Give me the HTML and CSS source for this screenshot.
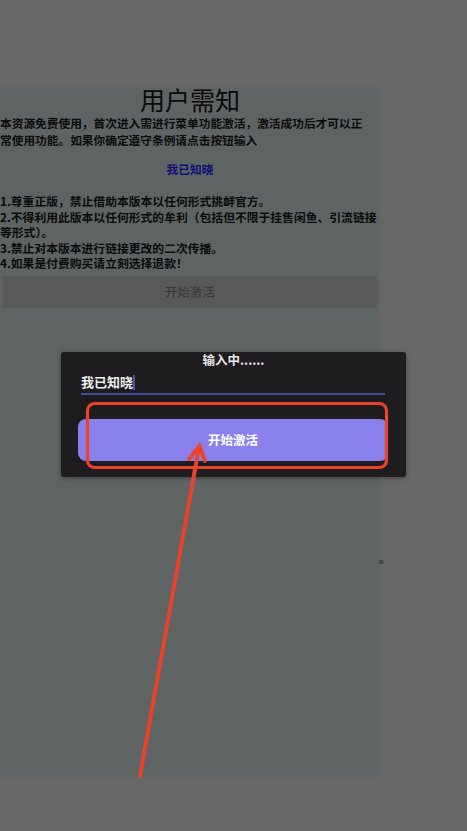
FILE: index.html
```html
<!DOCTYPE html>
<html lang="zh">
<head>
<meta charset="utf-8">
<link rel="stylesheet" href="styles.css">
</head>
<body>
<div class="screen">
  <div class="panel">
    <h1 class="title">用户需知</h1>
    <p class="intro">本资源免费使用，首次进入需进行菜单功能激活，激活成功后才可以正常使用功能。如果你确定遵守条例请点击按钮输入</p>
    <p class="ack">我已知晓</p>
    <ol class="rules">
      <li>1.尊重正版，禁止借助本版本以任何形式挑衅官方。</li>
      <li>2.不得利用此版本以任何形式的牟利（包括但不限于挂售闲鱼、引流链接等形式）。</li>
      <li>3.禁止对本版本进行链接更改的二次传播。</li>
      <li>4.如果是付费购买请立刻选择退款！</li>
    </ol>
    <div class="start-btn">开始激活</div>
    <div class="stray">。</div>
  </div>

  <div class="dialog">
    <div class="dialog-title">输入中......</div>
    <div class="field"><span class="field-text">我已知晓</span><span class="caret"></span></div>
    <div class="dialog-btn">开始激活</div>
  </div>

  <svg class="annot" width="467" height="831" viewBox="0 0 467 831" xmlns="http://www.w3.org/2000/svg">
    <rect x="87.5" y="403.5" width="299" height="64" rx="7" ry="7" fill="none" stroke="#e9432c" stroke-width="3.2"/>
    <line x1="140" y1="776" x2="198.5" y2="450" stroke="#e9432c" stroke-width="4" stroke-linecap="round"/>
    <polyline points="189,459 199.5,446 205,461" fill="none" stroke="#e9432c" stroke-width="4" stroke-linecap="round" stroke-linejoin="miter"/>
  </svg>
</div>
</body>
</html>
```

FILE: styles.css
```css
html, body {
  margin: 0;
  padding: 0;
  background: #676767;
}
.screen {
  position: relative;
  width: 467px;
  height: 831px;
  overflow: hidden;
  font-family: "Noto Sans CJK SC", "Noto Sans", sans-serif;
  color: #0b0b0b;
}
.panel {
  margin-top: 87px;
  width: 380px;
  height: 690px;
  background: #5e6463;
  display: flex;
  flex-direction: column;
}
.title {
  margin: -4px 0 0;
  font-size: 25px;
  line-height: 32px;
  font-weight: 400;
  text-align: center;
  color: #0a0a0a;
}
.intro {
  margin: 0;
  padding-right: 12px;
  font-size: 11.7px;
  line-height: 16.5px;
  font-weight: 700;
}
.ack {
  margin: 13px 0 0;
  font-size: 11.7px;
  line-height: 16px;
  font-weight: 700;
  text-align: center;
  color: #0f1077;
}
.rules {
  list-style: none;
  margin: 16px 0 0;
  padding: 0;
  font-size: 11.8px;
  line-height: 15.6px;
  font-weight: 700;
}
.start-btn {
  margin: 5px 3px 0;
  height: 32px;
  background: #595959;
  color: #363636;
  font-size: 12.5px;
  line-height: 32px;
  text-align: center;
}
.stray {
  margin-top: 244px;
  padding-left: 379px;
  white-space: nowrap;
  font-size: 11px;
  line-height: 12px;
  font-weight: 700;
  color: #1a1a1a;
}
.dialog {
  position: absolute;
  left: 61px;
  top: 352px;
  width: 345px;
  height: 125px;
  background: #1f1c20;
  border-radius: 3px;
  box-shadow: 0 1px 4px rgba(0,0,0,0.35);
  display: flex;
  flex-direction: column;
}
.dialog-title {
  text-align: center;
  color: #e6e6e6;
  font-size: 12.5px;
  font-weight: 700;
  line-height: 15px;
}
.field {
  margin: 4px 21px 0 20px;
  height: 22px;
  border-bottom: 2px solid #3b4f9a;
  display: flex;
  align-items: center;
}
.field-text {
  color: #eeeeee;
  font-size: 13px;
  font-weight: 700;
  line-height: 16px;
}
.caret {
  width: 2px;
  height: 15px;
  background: #3f56b0;
}
.dialog-btn {
  margin: 24px 18px 0 17px;
  height: 42px;
  border-radius: 8px;
  background: #8a80ec;
  color: #ffffff;
  font-size: 12.5px;
  font-weight: 700;
  line-height: 42px;
  text-align: center;
}
.annot {
  position: absolute;
  left: 0;
  top: 0;
  pointer-events: none;
}
```
